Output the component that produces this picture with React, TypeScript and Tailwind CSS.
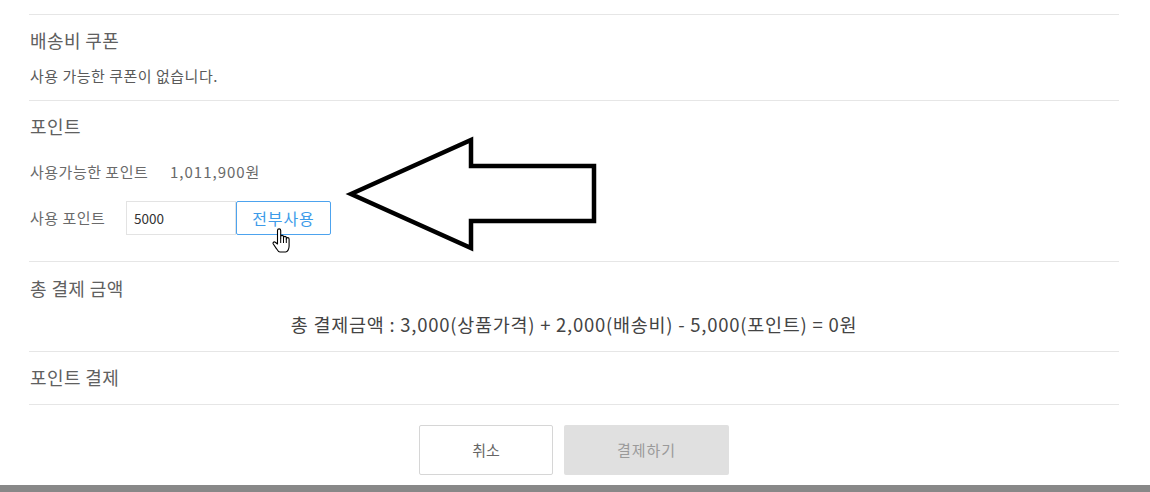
import React from "react";

const font = { fontFamily: '"Noto Sans CJK KR", "Noto Sans", sans-serif' };

function Arrow() {
  return (
    <svg className="absolute left-[340px] top-[130px]" width="270" height="130" viewBox="340 130 270 130" fill="none">
      <polygon
        points="351,194 471,140 471,166 594,166 594,221 471,221 471,248"
        stroke="#000"
        strokeWidth="4.5"
        strokeLinejoin="miter"
        fill="#fff"
      />
    </svg>
  );
}

function HandCursor() {
  return (
    <svg className="absolute left-[272px] top-[228px]" width="20" height="26" viewBox="0 0 20 26">
      <path
        d="M5.5 13 V2.5 a1.6 1.6 0 0 1 3.2 0 V10 V8.8 a1.4 1.4 0 0 1 2.8 0 V10.5 V9.8 a1.4 1.4 0 0 1 2.8 0 V11.5 V11 a1.4 1.4 0 0 1 2.8 0 V18 c0 3 -1.5 6 -3.5 6 H8 c-1.8 0 -2.6 -1.6 -3.6 -3.4 L1.3 16 c-0.8 -1.3 0.6 -2.8 2 -1.8 L5.5 16 Z"
        fill="#fff"
        stroke="#000"
        strokeWidth="1.1"
        strokeLinejoin="round"
      />
      <path d="M8.7 10 V15 M11.5 10.5 V15 M14.3 11.5 V15" stroke="#000" strokeWidth="1" />
    </svg>
  );
}

export default function App() {
  return (
    <div className="relative w-[1150px] h-[492px] bg-white flex flex-col overflow-hidden" style={font}>
      <div className="ml-[29px] w-[1090px] mt-[14px] flex flex-col">
        {/* 배송비 쿠폰 */}
        <section className="border-t border-[#e6e6e6] pt-[13px] pb-[14px] flex flex-col">
          <h2 className="h-[24px] leading-[24px] text-[18px] tracking-[0.4px] text-[#606060] pl-px">배송비 쿠폰</h2>
          <p className="mt-[14px] h-[20px] leading-[20px] text-[15px] tracking-[0.5px] text-[#5a5a5a] pl-px">사용 가능한 쿠폰이 없습니다.</p>
        </section>

        {/* 포인트 */}
        <section className="border-t border-[#e6e6e6] pt-[13px] pb-[26px] flex flex-col">
          <h2 className="h-[24px] leading-[24px] text-[18px] tracking-[0.4px] text-[#606060] pl-px">포인트</h2>
          <div className="mt-[24px] h-[20px] leading-[20px] flex text-[15px] tracking-[0.5px] text-[#6a6a6a] pl-px">
            <span className="w-[140px]">사용가능한 포인트</span>
            <span className="tracking-[1px]">1,011,900원</span>
          </div>
          <div className="mt-[19px] flex items-center">
            <span className="w-[97px] text-[15px] tracking-[0.5px] text-[#6a6a6a] pl-px">사용 포인트</span>
            <div className="w-[110px] h-[34px] border border-[#e3e3e3] flex items-center pl-[7px] text-[13.5px] text-[#333]">5000</div>
            <button className="w-[95px] h-[34px] border border-[#4da3ee] rounded-[2px] text-[16px] tracking-[0.9px] text-[#3d9be9] flex items-center justify-center">
              전부사용
            </button>
          </div>
        </section>

        {/* 총 결제 금액 */}
        <section className="border-t border-[#e6e6e6] pt-[14px] pb-[15px] flex flex-col">
          <h2 className="h-[24px] leading-[24px] text-[18px] tracking-[0.4px] text-[#606060] pl-px">총 결제 금액</h2>
          <p className="mt-[12px] h-[24px] leading-[24px] text-[18.5px] tracking-[0.75px] text-[#444] text-center">
            총 결제금액 : 3,000(상품가격) + 2,000(배송비) - 5,000(포인트) = 0원
          </p>
        </section>

        {/* 포인트 결제 */}
        <section className="border-t border-[#e6e6e6] pt-[13px] pb-[15px] flex flex-col">
          <h2 className="h-[24px] leading-[24px] text-[18px] tracking-[0.4px] text-[#606060] pl-px">포인트 결제</h2>
        </section>

        <div className="border-t border-[#e6e6e6] pt-[20px] flex justify-center gap-[11px]">
          <button className="w-[134px] h-[50px] border border-[#d6d6d6] rounded-[2px] bg-white text-[15px] text-[#666]">취소</button>
          <button className="w-[165px] h-[50px] bg-[#e0e0e0] rounded-[2px] text-[15px] tracking-[1px] text-[#9a9a9a]">결제하기</button>
        </div>
      </div>
      <div className="mt-auto h-[7px] bg-[#888]" />
      <Arrow />
      <HandCursor />
    </div>
  );
}
